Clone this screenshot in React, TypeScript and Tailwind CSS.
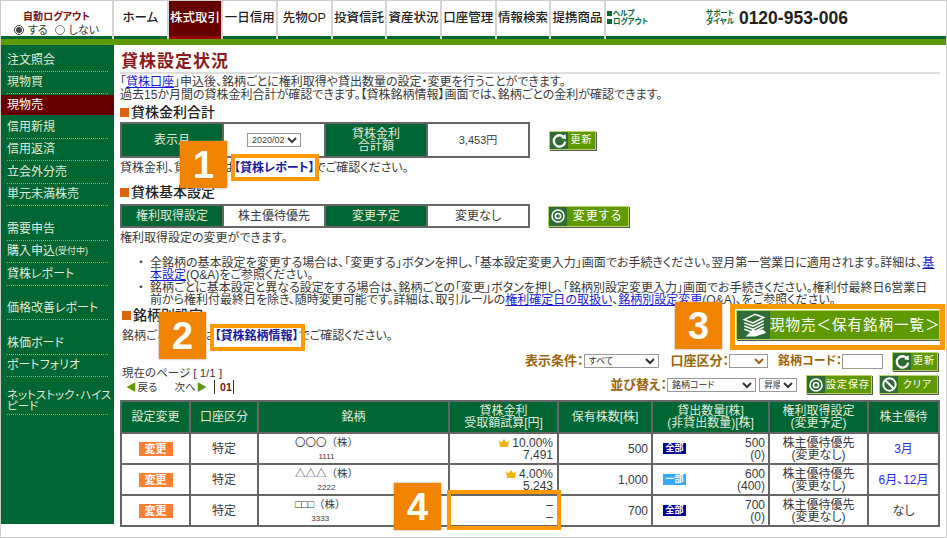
import React from 'react';

const navItems = ['ホーム', '株式取引', '一日信用', '先物OP', '投資信託', '資産状況', '口座管理', '情報検索', '提携商品'];

const sideItems = [
  { label: '注文照会' },
  { label: '現物買' },
  { label: '現物売', active: true },
  { label: '信用新規' },
  { label: '信用返済' },
  { label: '立会外分売' },
  { label: '単元未満株売' },
  { label: '需要申告', gap: true },
  { label: '購入申込', small: '(受付中)' },
  { label: '貸株レポート' },
  { label: '価格改善レポート', gap: true },
  { label: '株価ボード', gap: true },
  { label: 'ポートフォリオ' },
];

const rows = [
  { name: '〇〇〇（株）', code: '1111', rate: '10.00%', amount: '7,491', held: '500', tag: '全部', lend: '500', keep: '(0)', yutai: '3月' },
  { name: '△△△（株）', code: '2222', rate: '4.00%', amount: '5,243', held: '1,000', tag: '一部', lend: '600', keep: '(400)', yutai: '6月、12月' },
  { name: '□□□（株）', code: '3333', rate: '', amount: '', held: '700', tag: '全部', lend: '700', keep: '(0)', yutai: 'なし' },
];

const Refresh = ({ size = 15 }: { size?: number }) => (
  <svg width={size} height={size} viewBox="0 0 14 14" fill="none">
    <path d="M11.5 4.5A5.3 5.3 0 1 0 12.3 8" stroke="#fff" strokeWidth="2.2" />
    <path d="M8.5 4.8 13 5.6 12.6 1z" fill="#fff" />
  </svg>
);

const Target = () => (
  <svg width="14" height="14" viewBox="0 0 14 14" fill="none">
    <circle cx="7" cy="7" r="6" stroke="#fff" strokeWidth="1.5" />
    <circle cx="7" cy="7" r="2.6" stroke="#fff" strokeWidth="1.5" />
  </svg>
);

const Ban = () => (
  <svg width="15" height="15" viewBox="0 0 14 14" fill="none">
    <circle cx="7" cy="7" r="5.8" stroke="#fff" strokeWidth="1.8" />
    <path d="M3 3l8 8" stroke="#fff" strokeWidth="1.8" />
  </svg>
);

const GreenBtn = ({ icon, label, className, iconClass = 'w-[18px]' }: { icon: React.ReactNode; label: string; className: string; iconClass?: string }) => (
  <button className={`flex items-stretch border border-[#b7d36a] bg-[#5f9900] text-white shadow-[1px_1px_0_#555] ${className}`}>
    <span className={`flex shrink-0 items-center justify-center bg-[#2f6b35] ${iconClass}`}>{icon}</span>
    <span className="flex flex-1 items-center justify-center whitespace-nowrap tracking-[1px]">{label}</span>
  </button>
);

const Heading = ({ children }: { children: React.ReactNode }) => (
  <h3 className="flex items-center gap-[2px] text-[14px] leading-[16px] font-medium text-[#222]">
    <span className="h-[9px] w-[9px] bg-[#d9650a]" />
    {children}
  </h3>
);

const Crown = () => (
  <svg width="10" height="8" viewBox="0 0 10 8">
    <path d="M0 1l2.5 2.5L5 0l2.5 3.5L10 1 9 8H1z" fill="#f0b400" />
  </svg>
);

const Badge = ({ n, className }: { n: number; className: string }) => (
  <div className={`absolute flex h-[47px] w-[47px] items-center justify-center bg-[#f08300] text-[38px] font-bold text-white shadow-[0_0_2px_#a86] ${className}`}>
    {n}
  </div>
);

const Frame = ({ className }: { className: string }) => (
  <div className={`absolute border-[4px] border-[#ff9900] ${className}`} />
);

export default function App() {
  return (
    <div className="relative h-[538px] w-[947px] overflow-hidden border border-[#cccccc] bg-white font-['Liberation_Sans','Noto_Sans_CJK_JP',sans-serif] text-[12px] leading-[12px] text-[#3a3a3a] [font-feature-settings:'palt']">
      {/* top nav */}
      <header className="flex h-[44px] border-b-[6px] border-b-[#5f9900]">
        <div className="flex w-[113px] flex-col items-center border-r-2 border-[#d5d5d5] pt-[10px] shadow-[inset_0_-3px_0_#006633]">
          <div className="text-[10px] leading-[12px] font-bold text-[#7a1010]">自動ログアウト</div>
          <div className="flex items-center gap-[4px] text-[11px] leading-[14px]">
            <input type="radio" name="logout" defaultChecked className="h-[10px] w-[10px] accent-[#444]" />
            <span>する</span>
            <input type="radio" name="logout" className="ml-[3px] h-[10px] w-[10px]" />
            <span>しない</span>
          </div>
        </div>
        {navItems.map((item, i) => (
          <div
            key={item}
            className={`flex w-[54.67px] items-center justify-center border-r-2 border-[#d5d5d5] pb-[5px] text-[12.5px] font-medium whitespace-nowrap ${
              i === 1
                ? 'bg-[#660000] text-white shadow-[inset_0_-3px_0_#990000]'
                : 'text-[#222] shadow-[inset_0_-3px_0_#006633]'
            }`}
          >
            {item}
          </div>
        ))}
        <div className="flex flex-1 items-center pb-[5px] pl-[1px] shadow-[inset_0_-3px_0_#006633]">
          <div className="w-[99px] text-[7.5px] leading-[8px] font-bold text-[#006633]">
            <div className="flex items-center gap-[1px]"><span className="h-[5px] w-[5px] bg-[#006633]" />ヘルプ</div>
            <div className="flex items-center gap-[1px]"><span className="h-[5px] w-[5px] bg-[#006633]" />ログアウト</div>
          </div>
          <div className="w-[33px] text-[7.5px] leading-[8px] font-bold text-[#006633]">
            サポート<br />ダイヤル
          </div>
          <div className="font-['Liberation_Sans',sans-serif] text-[17.5px] font-bold text-[#222]">0120-953-006</div>
        </div>
      </header>

      <div className="flex">
        {/* side menu */}
        <aside className="h-[479px] w-[113px] shrink-0 bg-[#006633] pt-[4px] text-[12px] leading-[12px] text-[#e0eadb]">
          {sideItems.map((it) => (
            <div key={it.label} className={it.gap ? 'mt-[12px]' : ''}>
              {it.active ? (
                <div className="my-[1px] flex h-[20px] items-center bg-[#660000] pl-[6px] text-white">{it.label}</div>
              ) : (
                <div className="mx-[6px] flex h-[22.5px] items-center border-b border-dotted border-[#9aa860] whitespace-nowrap">
                  {it.label}
                  {it.small && <span className="text-[9px]">{it.small}</span>}
                </div>
              )}
            </div>
          ))}
          <div className="mx-[6px] mt-[13px] border-b border-dotted border-[#9aa860] pb-[2px] text-[11.5px] leading-[11px]">
            <span className="-mr-[6px] block">ネットストック･ハイスピード</span>
          </div>
        </aside>

        {/* main */}
        <main className="w-[826px] pl-[6px] pt-[7px]">
          <h1 className="border-b-2 border-[#dddddd] pb-[1px] pl-[1px] text-[17px] leading-[19px] font-bold tracking-[1px] text-[#8b1a1a]">貸株設定状況</h1>

          <p className="mt-[2px] leading-[12.5px]">
            「<a className="text-[#1a1ad0] underline">貸株口座</a>」申込後、銘柄ごとに権利取得や貸出数量の設定・変更を行うことができます。
            <br />
            過去15か月間の貸株金利合計が確認できます。【貸株銘柄情報】画面では、銘柄ごとの金利が確認できます。
          </p>

          <div className="mt-[3px]"><Heading>貸株金利合計</Heading></div>
          <div className="mt-[2px] flex items-center">
            <div className="grid h-[36px] w-[410px] grid-cols-4 gap-[2px] border-2 border-[#666] bg-[#666] text-center">
              <div className="flex items-center justify-center bg-[#006633] text-[#e0eadb]">表示月</div>
              <div className="flex items-center justify-center bg-white">
                <select className="h-[14px] w-[54px] border border-[#999] bg-white text-[9px]"><option>2020/02</option></select>
              </div>
              <div className="flex items-center justify-center bg-[#006633] text-[#e0eadb]">貸株金利<br />合計額</div>
              <div className="flex items-center justify-center bg-white text-[11px]">3,453円</div>
            </div>
            <GreenBtn icon={<Refresh />} label="更新" className="ml-[19px] h-[19px] w-[47px] text-[10px]" />
          </div>
          <p className="mt-[3px] leading-[14px]">
            貸株金利、貸株残高は<a className="font-bold text-[#1a1a9c]">【貸株レポート】</a>でご確認ください。
          </p>

          <div className="mt-[9px]"><Heading>貸株基本設定</Heading></div>
          <div className="mt-[4px] flex items-center">
            <div className="grid h-[24px] w-[410px] grid-cols-4 gap-[2px] border-2 border-[#666] bg-[#666] text-center">
              <div className="flex items-center justify-center bg-[#006633] text-[#e0eadb]">権利取得設定</div>
              <div className="flex items-center justify-center bg-white">株主優待優先</div>
              <div className="flex items-center justify-center bg-[#006633] text-[#e0eadb]">変更予定</div>
              <div className="flex items-center justify-center bg-white">変更なし</div>
            </div>
            <GreenBtn icon={<Target />} label="変更する" className="ml-[18px] h-[21px] w-[81px] text-[12px]" />
          </div>
          <p className="mt-[3px] leading-[14px]">権利取得設定の変更ができます。</p>

          <ul className="mt-[12px] pr-[1px] pl-[30px] leading-[12px]">
            <li className="relative">
              <span className="absolute -left-[12px]">・</span>
              全銘柄の基本設定を変更する場合は、「変更する」ボタンを押し、「基本設定変更入力」画面でお手続きください。翌月第一営業日に適用されます。詳細は、<a className="text-[#1a1ad0] underline">基本設定</a>(Q&amp;A)をご参照ください。
            </li>
            <li className="relative mt-[1px]">
              <span className="absolute -left-[12px]">・</span>
              銘柄ごとに基本設定と異なる設定をする場合は、銘柄ごとの「変更」ボタンを押し、「銘柄別設定変更入力」画面でお手続きください。権利付最終日6営業日前から権利付最終日を除き、随時変更可能です。詳細は、取引ルールの<a className="text-[#1a1ad0] underline">権利確定日の取扱い</a>、<a className="text-[#1a1ad0] underline">銘柄別設定変更</a>(Q&amp;A)、をご参照ください。
            </li>
          </ul>

          <div className="flex items-start justify-between">
            <div className="pt-[1px] pl-[2px]">
              <Heading>銘柄別設定</Heading>
              <p className="mt-[6px] leading-[14px]">
                銘柄ごとの金利は<a className="font-bold text-[#1a1a9c]">【貸株銘柄情報】</a>でご確認ください。
              </p>
            </div>
            <GreenBtn
              icon={
                <svg width="28" height="28" viewBox="0 0 26 26" fill="none" stroke="#fff" strokeWidth="1.4">
                  <path d="M4 8l10-5 8 3-10 5z" />
                  <path d="M4 11l8 3 10-5M4 14l8 3 10-5M4 17l8 3 10-5" />
                  <path d="M7 23h7l9-3-2-2-6 1-3-1z" fill="#fff" />
                </svg>
              }
              iconClass="w-[33px]"
              label="現物売＜保有銘柄一覧＞"
              className="mt-[4px] h-[30px] w-[204px] border-[#3c6b1e] text-[14.5px]"
            />
          </div>

          <div className="mt-[8px] flex items-end justify-between pl-[2px]">
            <div className="text-[11.5px] leading-[14px]">
              現在のページ [ 1/1 ]
              <div className="flex items-center gap-[1px] pl-[4px] text-[10.5px]">
                <span className="text-[#5f9900]">◀</span>戻る
                <span className="ml-[16px]">次へ</span>
                <span className="text-[#5f9900]">▶</span>
                <span className="ml-[6px] border-x border-[#333] pl-[5px] pr-[1px] font-bold text-[#7a1010]">01</span>
              </div>
            </div>
            <div className="flex flex-col items-end pr-[2px] text-[12px] font-bold text-[#996611]">
              <div className="flex h-[20px] items-center">
                <span className="text-[13px]">表示条件：</span>
                <select className="h-[14px] w-[75px] border border-[#999] bg-white text-[9px] font-normal text-[#333]"><option>すべて</option></select>
                <span className="ml-[12px] text-[13px]">口座区分：</span>
                <select className="h-[14px] w-[39px] border border-[#999] bg-white text-[9px]"><option></option></select>
                <span className="ml-[10px]">銘柄コード：</span>
                <input className="h-[15px] w-[41px] border border-[#999] bg-white" />
                <GreenBtn icon={<Refresh />} label="更新" className="ml-[9px] h-[19px] w-[46px] text-[10px] font-normal" />
              </div>
              <div className="mt-[4px] flex h-[19px] items-center">
                <span className="text-[13px]">並び替え：</span>
                <select className="h-[14px] w-[89px] border border-[#999] bg-white text-[9px] font-normal text-[#333]"><option>銘柄コード</option></select>
                <select className="ml-[3px] h-[14px] w-[38px] border border-[#999] bg-white text-[9px] font-normal text-[#333]"><option>昇順</option></select>
                <GreenBtn icon={<Target />} label="設定保存" className="ml-[9px] h-[19px] w-[66px] text-[10px] font-normal" />
                <GreenBtn icon={<Ban />} label="クリア" className="ml-[7px] h-[19px] w-[59px] text-[10px] font-normal" />
              </div>
            </div>
          </div>

          <table className="mt-[6px] w-[820px] table-fixed border-separate border-spacing-[2px] bg-[#666] text-center">
            <colgroup>
              <col className="w-[67px]" />
              <col className="w-[66px]" />
              <col className="w-[189px]" />
              <col className="w-[107px]" />
              <col className="w-[92px]" />
              <col className="w-[115px]" />
              <col className="w-[97px]" />
              <col />
            </colgroup>
            <thead>
              <tr className="h-[30px] bg-[#006633] text-[#e0eadb]">
                <th className="font-normal">設定変更</th>
                <th className="font-normal">口座区分</th>
                <th className="font-normal">銘柄</th>
                <th className="font-normal">貸株金利<br />受取額試算[円]</th>
                <th className="font-normal">保有株数[株]</th>
                <th className="font-normal">貸出数量[株]<br />(非貸出数量)[株]</th>
                <th className="font-normal">権利取得設定<br />(変更予定)</th>
                <th className="font-normal">株主優待</th>
              </tr>
            </thead>
            <tbody>
              {rows.map((r) => (
                <tr key={r.code} className="h-[29px] bg-white">
                  <td>
                    <span className="inline-block h-[14px] w-[34px] bg-[#ff7f32] text-[11px] leading-[14px] font-bold text-white">変更</span>
                  </td>
                  <td>特定</td>
                  <td className="text-left">
                    <div className="inline-flex flex-col items-center pl-[36px] text-[10.5px] [font-feature-settings:normal]">
                      <span>{r.name}</span>
                      <span className="mt-[5px] text-[8px] leading-[8px]">{r.code}</span>
                    </div>
                  </td>
                  <td className="pr-[4px] text-right">
                    {r.rate ? (
                      <>
                        <div className="flex items-center justify-end gap-[3px]"><Crown />{r.rate}</div>
                        {r.amount}
                      </>
                    ) : (
                      <>–<br />–</>
                    )}
                  </td>
                  <td className="pr-[3px] text-right">{r.held}</td>
                  <td className="px-[3px]">
                    <div className="flex items-center justify-between pl-[7px]">
                      <span className={`h-[11px] w-[23px] text-[9px] leading-[11px] font-bold text-white ${r.tag === '全部' ? 'bg-[#000099]' : 'bg-[#33aaff]'}`}>{r.tag}</span>
                      <span className="text-right">{r.lend}<br />{r.keep}</span>
                    </div>
                  </td>
                  <td>株主優待優先<br />(変更なし)</td>
                  <td className={r.yutai === 'なし' ? '' : 'text-[#2a2aee]'}>{r.yutai}</td>
                </tr>
              ))}
            </tbody>
          </table>
        </main>
      </div>

      {/* annotation overlay */}
      <Frame className="left-[230px] top-[153px] h-[27px] w-[88px]" />
      <Frame className="left-[209px] top-[323px] h-[27px] w-[95px]" />
      <Frame className="left-[729px] top-[303px] h-[46px] w-[215px] border-[5px]" />
      <Frame className="left-[446px] top-[489px] h-[40px] w-[114px]" />
      <Badge n={1} className="left-[179px] top-[140px]" />
      <Badge n={2} className="left-[158px] top-[311px]" />
      <Badge n={3} className="left-[674px] top-[301px]" />
      <Badge n={4} className="left-[393px] top-[482px]" />
    </div>
  );
}
